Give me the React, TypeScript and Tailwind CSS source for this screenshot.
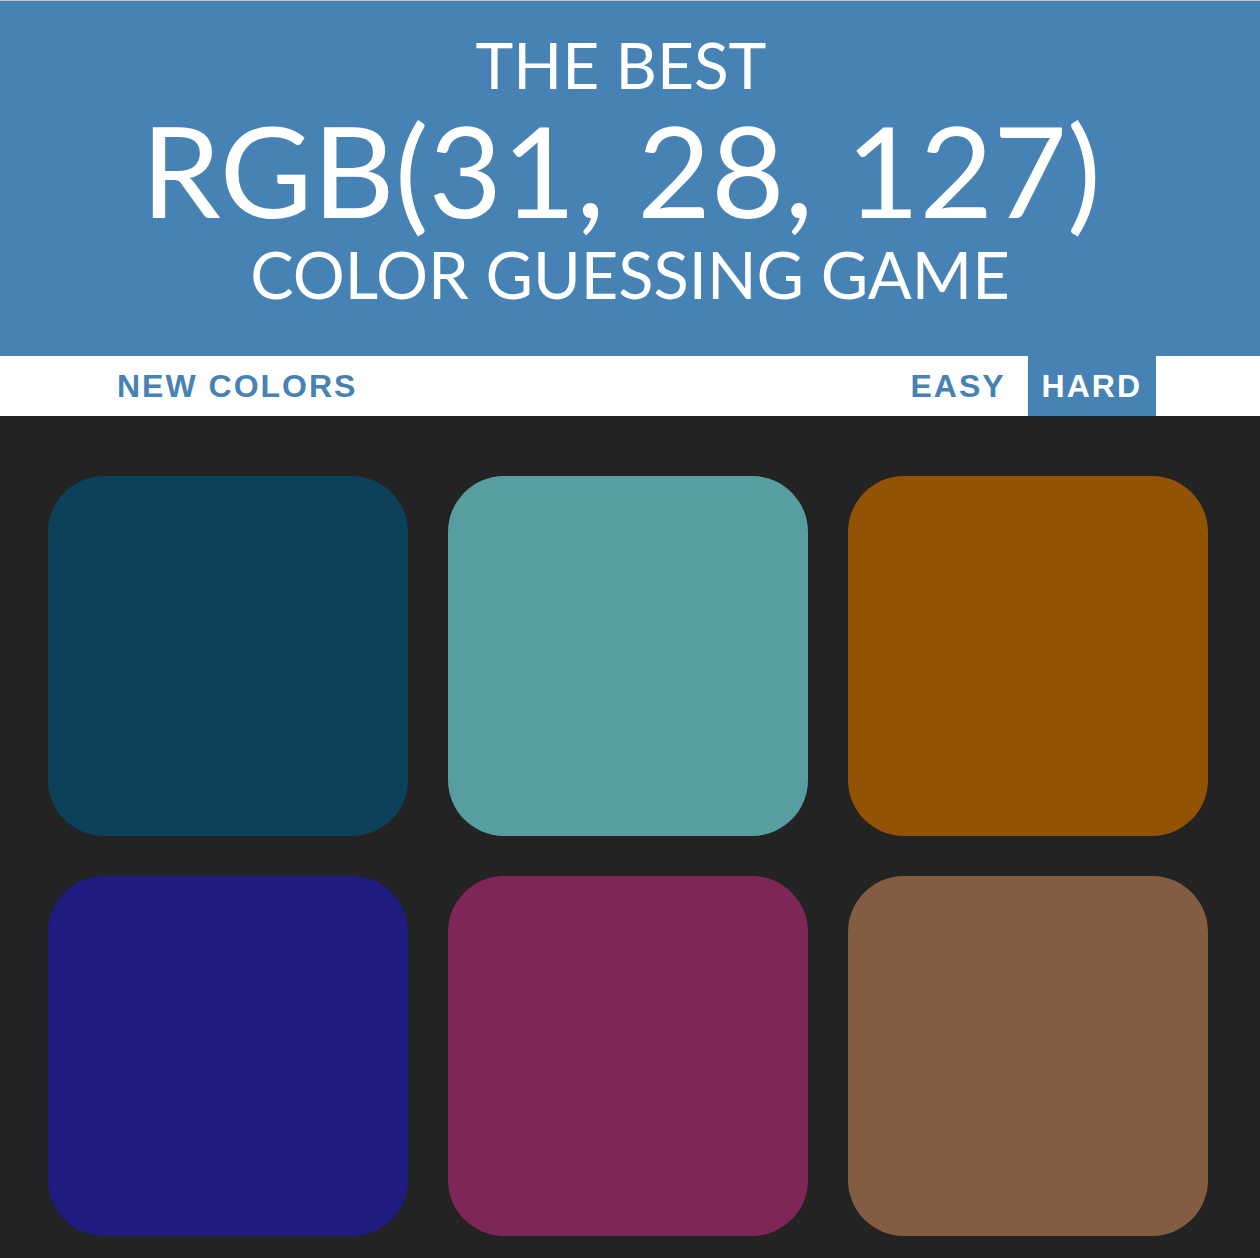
import React from "react";

const colors = ["#0d4059", "#579ea1", "#925305", "#1f1c7f", "#7e2756", "#825d42"];

export default function App() {
  return (
    <div className="w-[1260px] h-[1258px] bg-[#232323] overflow-hidden" style={{ fontFamily: "Lato, 'Noto Sans', sans-serif" }}>
      <div className="h-[1px] bg-[#c4c4c4]" />
      <header className="h-[355px] bg-[#4682b4] text-white text-center flex flex-col items-center">
        <div className="text-[64px] leading-[64px] mt-[32px] pr-[18px] font-normal">THE BEST</div>
        <div className="text-[127px] leading-[127px] mt-[9px] pr-[18px] font-normal">RGB(31, 28, 127)</div>
        <div className="text-[65px] leading-[65px] mt-[9px] font-normal">COLOR GUESSING GAME</div>
      </header>
      <nav className="h-[60px] bg-white" style={{ fontFamily: "'Liberation Sans', Arial, sans-serif" }}>
        <div className="w-[1052px] mx-auto h-full flex items-stretch justify-between text-[32px] font-bold tracking-[2px] text-[#4682b4]">
          <button className="px-[13px] h-full flex items-center">NEW COLORS</button>
          <div className="flex h-full gap-[8px]">
            <button className="px-[14px] h-full flex items-center">EASY</button>
            <button className="px-[14px] h-full flex items-center bg-[#4682b4] text-white">HARD</button>
          </div>
        </div>
      </nav>
      <main className="pt-[60px] pl-[48px]">
        <div className="grid grid-cols-[360px_360px_360px] gap-[40px]">
          {colors.map((c) => (
            <div key={c} className="w-[360px] h-[360px] rounded-[56px]" style={{ backgroundColor: c }} />
          ))}
        </div>
      </main>
    </div>
  );
}
